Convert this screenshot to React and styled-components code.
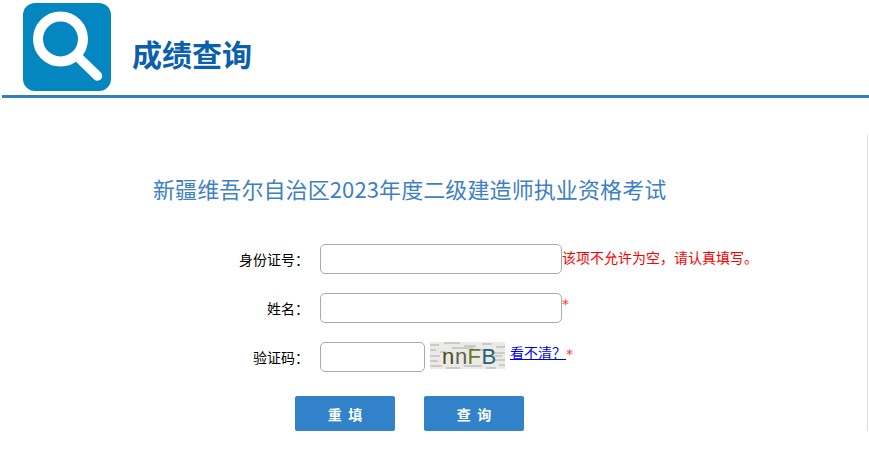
import React from 'react';
import styled, { createGlobalStyle } from 'styled-components';

const GlobalStyle = createGlobalStyle`
body {
    margin: 0;
    background: #fff;
    font-family: "Noto Sans CJK SC", "Liberation Sans", sans-serif;
}
`

const Logo = () => (
    <svg width="88" height="88" viewBox="0 0 88 88">
        <rect width="88" height="88" rx="12" fill="#0486c0" />
        <circle cx="37.5" cy="36" r="22.5" fill="none" stroke="#fff" strokeWidth="10" />
        <path d="M55 54 L74.5 73" fill="none" stroke="#fff" strokeWidth="9.5" strokeLinecap="round" />
    </svg>
)

const Captcha = () => (
    <CaptchaBox width="75" height="27" viewBox="0 0 75 27">
        <rect width="75" height="27" fill="#ece9e6" />
        <g fill="none" stroke="#bcc4bd" strokeWidth="1.5">
            <path d="M0 3 H9 M14 1 H30 M34 4 H46 M52 2 H62 M66 5 H75" />
            <path d="M0 8 H6 M10 10 H16 M22 6 H44 M50 8 H60 M62 11 H75" />
            <path d="M0 14 H10 M62 14 H72" />
            <path d="M0 19 H8 M64 18 H75" />
            <path d="M0 24 H12 M16 26 H30 M34 24 H52 M56 26 H66 M69 23 H75" />
        </g>
        <CaptchaChar x="12" y="22" fill="#4c4a24">n</CaptchaChar>
        <CaptchaChar x="25" y="22" fill="#5c6254">n</CaptchaChar>
        <CaptchaChar x="37.5" y="22" fill="#6e7430">F</CaptchaChar>
        <CaptchaChar x="51.5" y="22" fill="#1f6480">B</CaptchaChar>
    </CaptchaBox>
)

const App = () => (
    <>
        <GlobalStyle />
        <Header>
            <Logo />
            <PageTitle>成绩查询</PageTitle>
        </Header>
        <Main>
            <ExamTitle>新疆维吾尔自治区2023年度二级建造师执业资格考试</ExamTitle>
            <Form>
                <Row>
                    <Label>身份证号：</Label>
                    <Input />
                    <ErrorText>该项不允许为空，请认真填写。</ErrorText>
                </Row>
                <Row>
                    <Label>姓名：</Label>
                    <Input />
                    <Star>*</Star>
                </Row>
                <Row>
                    <Label>验证码：</Label>
                    <Input $short />
                    <Captcha />
                    <RefreshLink href="#">看不清？</RefreshLink>
                    <CaptchaStar>*</CaptchaStar>
                </Row>
                <Actions>
                    <Button type="button">重&nbsp;&nbsp;填</Button>
                    <Button type="button">查&nbsp;&nbsp;询</Button>
                </Actions>
            </Form>
        </Main>
    </>
)

const Header = styled.header`
display: flex;
align-items: flex-start;
height: 92px;
margin-left: 2px;
padding: 3px 0 0 21px;
border-bottom: 3px solid #337fc1;
`

const PageTitle = styled.h1`
margin: 30px 0 0 21px;
font-size: 30px;
line-height: 40px;
font-weight: 700;
color: #0b5fac;
`

const Main = styled.main`
box-sizing: border-box;
height: 296px;
margin: 37px 1px 0 0;
border-right: 1px solid #ddd;
`

const ExamTitle = styled.h2`
margin: 0;
padding: 36px 0 0 153px;
font-size: 22px;
line-height: 34px;
font-weight: 400;
letter-spacing: 0.1px;
color: #3f7fc4;
`

const Form = styled.form`
display: flex;
flex-direction: column;
gap: 19px;
margin-top: 39px;
`

const Row = styled.div`
display: flex;
align-items: flex-start;
height: 30px;
`

const Label = styled.label`
width: 309px;
margin-right: 11px;
font-size: 14px;
line-height: 30px;
text-align: right;
color: #000;
`

const Input = styled.input`
box-sizing: border-box;
width: ${props => props.$short ? '105px' : '242px'};
height: 30px;
padding: 0 6px;
border: 1px solid #aaa;
border-radius: 5px;
background: #fff;
outline: none;
`

const ErrorText = styled.span`
font-size: 14px;
line-height: 27px;
color: #f00;
`

const Star = styled.span`
font-family: "DejaVu Sans", sans-serif;
font-size: 14px;
line-height: 22px;
color: #f33;
`

const CaptchaBox = styled.svg`
display: block;
margin-left: 5px;
`

const CaptchaChar = styled.text`
font-family: "Liberation Sans", sans-serif;
font-size: 22px;
`

const RefreshLink = styled.a`
margin-left: 5px;
font-size: 14px;
line-height: 20px;
color: #00e;
`

const CaptchaStar = styled(Star)`
line-height: 24px;
`

const Actions = styled.div`
display: flex;
gap: 29px;
margin: 5px 0 0 295px;
`

const Button = styled.button`
width: 100px;
height: 35px;
padding: 0;
border: none;
border-radius: 2px;
background: #3182c8;
color: #fff;
font-family: inherit;
font-size: 14px;
font-weight: 700;
`

export default App;
